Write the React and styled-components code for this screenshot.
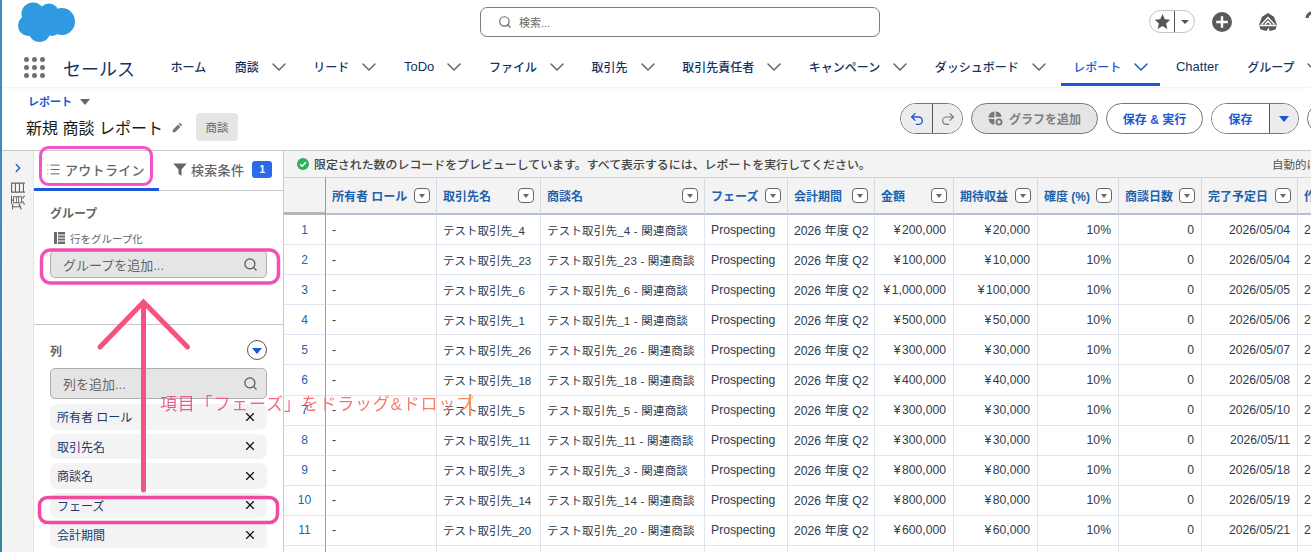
import React from "react";
import styled, { createGlobalStyle } from "styled-components";
import { ChevronDown, ChevronRight, Search, X, List, Undo2, Redo2 } from "lucide-react";

const FONT = `"Liberation Sans", "Noto Sans CJK JP", sans-serif`;

const Global = createGlobalStyle`
  html, body { margin: 0; padding: 0; background: #fff; }
  body { font-family: ${FONT}; overflow: hidden; }
  * { box-sizing: border-box; }
`;

const Page = styled.div`
  position: relative;
  width: 1311px;
  height: 552px;
  overflow: hidden;
  display: flex;
  flex-direction: column;
  background: #fff;
`;
const DesktopEdge = styled.div`
  position: absolute;
  left: 0;
  top: 0;
  bottom: 0;
  width: 2px;
  background: linear-gradient(#3d8fc4, #3a8ab8 60%, #2f8c96);
`;

/* top bar */
const TopBar = styled.header`
  height: 50px;
  flex: none;
  display: grid;
  grid-template-columns: 480px 400px 1fr;
`;
const LogoCell = styled.div`
  padding: 2px 0 0 18px;
`;
const SearchBox = styled.div`
  margin-top: 7px;
  height: 30px;
  border: 1px solid #7d7d7d;
  border-radius: 7px;
  display: flex;
  align-items: center;
  padding-left: 17px;
  gap: 7px;
  font-size: 11px;
  color: #666;
`;
const Tools = styled.div`
  padding: 10px 0 0 269px;
  display: flex;
  align-items: flex-start;
`;
const Fav = styled.div`
  width: 46px;
  height: 23px;
  border: 1px solid #c4c4c4;
  border-radius: 12px;
  display: flex;
  flex: none;
`;
const FavPart = styled.div`
  width: ${(p) => p.$w}px;
  display: flex;
  align-items: center;
  justify-content: center;
  border-left: ${(p) => (p.$split ? "1px solid #555" : "none")};
`;
const ToolIcon = styled.div`
  flex: none;
  margin-left: ${(p) => p.$ml}px;
  height: 23px;
  display: flex;
  align-items: center;
`;

/* nav */
const Nav = styled.nav`
  height: 37px;
  flex: none;
  display: flex;
  align-items: stretch;
  padding-left: 24px;
  box-shadow: 0 1px 2px rgba(0, 0, 0, 0.06);
  position: relative;
`;
const AppGrid = styled.div`
  width: 21px;
  flex: none;
  display: grid;
  grid-template-columns: repeat(3, 5px);
  grid-auto-rows: 5px;
  gap: 3px;
  align-content: center;
  padding-bottom: 2px;
`;
const Dot = styled.span`
  border-radius: 50%;
  background: #6f6f6f;
`;
const AppName = styled.div`
  width: 95px;
  flex: none;
  margin-left: 18px;
  font-size: 18px;
  color: #14335f;
  display: flex;
  align-items: center;
  padding-bottom: 1px;
  white-space: nowrap;
`;
const NavItems = styled.div`
  display: flex;
  flex: none;
  gap: 3.6px;
  white-space: nowrap;
`;
const NavItem = styled.div`
  display: flex;
  align-items: center;
  gap: 14px;
  padding: 0 12.5px;
  margin-bottom: 1px;
  font-size: ${(p) => (p.$latin ? "13px" : "12px")};
  font-weight: 500;
  color: ${(p) => (p.$active ? "#1b57d6" : "#14335f")};
  border-bottom: 3px solid ${(p) => (p.$active ? "#1b57d6" : "transparent")};
  svg {
    color: ${(p) => (p.$active ? "#1b57d6" : "#666")};
    margin: 0 -6px;
  }
`;

/* page header */
const PageHead = styled.div`
  height: 63px;
  flex: none;
  display: flex;
  justify-content: space-between;
  padding: 0 0 0 26px;
`;
const Crumbs = styled.div`
  padding-top: 8px;
`;
const CrumbLink = styled.div`
  display: flex;
  align-items: center;
  gap: 8px;
  padding-left: 2px;
  font-size: 11px;
  font-weight: 700;
  color: #1b57d6;
  line-height: 14px;
`;
const Caret = styled.span`
  width: 0;
  height: 0;
  border-left: ${(p) => p.$s}px solid transparent;
  border-right: ${(p) => p.$s}px solid transparent;
  border-top: ${(p) => p.$h}px solid ${(p) => p.$c};
`;
const TitleRow = styled.div`
  display: flex;
  align-items: center;
  margin-top: 4px;
  height: 28px;
`;
const Title = styled.div`
  font-size: 16px;
  color: #181818;
  white-space: nowrap;
`;
const ObjectBadge = styled.div`
  margin-left: 13px;
  width: 42px;
  height: 28px;
  background: #e5e5e5;
  border-radius: 4px;
  display: flex;
  align-items: center;
  justify-content: center;
  font-size: 11.5px;
  color: #666;
`;
const Actions = styled.div`
  display: flex;
  gap: 8px;
  padding-top: 16px;
  width: 411px;
  flex: none;
  align-items: flex-start;
`;
const Btn = styled.div`
  flex: none;
  height: 31px;
  width: ${(p) => p.$w}px;
  border: 1px solid #777;
  border-radius: 16px;
  background: ${(p) => (p.$off ? "#e5e5e5" : "#fff")};
  color: ${(p) => (p.$off ? "#808080" : "#1b57d6")};
  font-size: 12px;
  font-weight: 700;
  display: flex;
  align-items: center;
  justify-content: center;
  gap: 6px;
  white-space: nowrap;
`;
const SplitBtn = styled.div`
  flex: none;
  height: 31px;
  width: ${(p) => p.$w}px;
  border: 1px solid #777;
  border-radius: 16px;
  overflow: hidden;
  display: flex;
`;
const SplitPart = styled.div`
  width: ${(p) => p.$w}px;
  flex: ${(p) => (p.$w ? "none" : "1")};
  background: ${(p) => (p.$off ? "#ececec" : "#fff")};
  border-left: ${(p) => (p.$split ? "1px solid #555" : "none")};
  color: ${(p) => p.$c || "#1b57d6"};
  font-size: 12px;
  font-weight: 700;
  display: flex;
  align-items: center;
  justify-content: center;
`;

/* main */
const Main = styled.main`
  flex: 1;
  min-height: 0;
  display: flex;
  border-top: 1px solid #c9c9c9;
`;
const Rail = styled.aside`
  width: 34px;
  flex: none;
  background: #f3f3f3;
  border-right: 1px solid #e5e5e5;
  display: flex;
  flex-direction: column;
  align-items: center;
  padding: 10px 0 0 2px;
  color: #1b57d6;
`;
const RailLabel = styled.div`
  margin-top: 5px;
  writing-mode: vertical-rl;
  text-orientation: sideways;
  transform: rotate(180deg);
  font-size: 15px;
  line-height: 15px;
  color: #666;
`;
const Panel = styled.section`
  width: 250px;
  flex: none;
  border-right: 1px solid #c9c9c9;
  display: flex;
  flex-direction: column;
`;
const Tabs = styled.div`
  height: 40px;
  flex: none;
  display: flex;
  border-bottom: 1px solid #c9c9c9;
`;
const Tab = styled.div`
  width: ${(p) => p.$w}px;
  flex: none;
  height: 40px;
  padding-left: ${(p) => p.$pl}px;
  display: flex;
  align-items: center;
  gap: 4px;
  font-size: 13px;
  font-weight: 500;
  letter-spacing: 0.3px;
  color: #666;
  border-bottom: 3px solid ${(p) => (p.$active ? "#1b57d6" : "transparent")};
`;
const CountBadge = styled.span`
  width: 20px;
  height: 17px;
  margin-left: 4px;
  border-radius: 3px;
  background: #2a6ae9;
  color: #fff;
  font-size: 10px;
  font-weight: 700;
  letter-spacing: 0;
  display: flex;
  align-items: center;
  justify-content: center;
`;
const Section = styled.div`
  padding: ${(p) => p.$pt}px 16px 0;
  height: ${(p) => p.$h || "auto"};
  border-bottom: ${(p) => (p.$line ? "1px solid #c9c9c9" : "none")};
  flex: none;
`;
const SectionHead = styled.div`
  display: flex;
  align-items: center;
  justify-content: space-between;
  height: 20px;
  font-size: 12px;
  font-weight: 700;
  color: #666;
`;
const SectionHeadTight = styled(SectionHead)`
  margin-top: -1px;
`;
const GroupHint = styled.div`
  display: flex;
  align-items: center;
  gap: 5px;
  margin: 8px 0 0 4px;
  height: 16px;
  font-size: 10.5px;
  color: #666;
`;
const PickInput = styled.div`
  height: ${(p) => p.$h}px;
  margin-top: ${(p) => p.$mt}px;
  border: 1px solid #b0b0b0;
  border-radius: 5px;
  background: #e5e5e5;
  display: flex;
  align-items: center;
  justify-content: space-between;
  padding: 0 8px 0 12px;
  font-size: 13px;
  color: #666;
`;
const Pills = styled.div`
  display: flex;
  flex-direction: column;
  gap: 4px;
  margin-top: 5px;
`;
const Pill = styled.div`
  height: 25.5px;
  border-radius: 7px;
  background: #f3f3f3;
  display: flex;
  align-items: center;
  justify-content: space-between;
  padding: 0 10px 0 7px;
  font-size: 12px;
  color: #17386f;
  svg { color: #111; }
`;
const RoundBtn = styled.div`
  width: 20px;
  height: 20px;
  border: 1px solid #555;
  border-radius: 50%;
  display: flex;
  align-items: center;
  justify-content: center;
  padding-top: 1px;
`;

/* report */
const Report = styled.section`
  flex: 1;
  min-width: 0;
  display: flex;
  flex-direction: column;
  overflow: hidden;
`;
const Notice = styled.div`
  height: 26px;
  flex: none;
  background: #f3f3f3;
  display: flex;
  align-items: center;
  justify-content: space-between;
  padding: 0 0 1px 13px;
  font-size: 11.93px;
  font-weight: 500;
  color: #444;
  white-space: nowrap;
`;
const NoticeMsg = styled.div`
  display: flex;
  align-items: center;
  gap: 5px;
`;
const NoticeAuto = styled.div`
  width: 39px;
  overflow: hidden;
  font-weight: 400;
  font-size: 11.5px;
  color: #555;
`;
const Table = styled.table`
  border-collapse: separate;
  border-spacing: 0;
  table-layout: fixed;
  width: 1228px;
`;
const HeadCell = styled.th`
  height: 38px;
  padding: 0 6px;
  background: #f3f3f3;
  border-top: 1px solid #cfd6e0;
  border-right: 1px solid #d3dae6;
  border-bottom: 2px solid #b4c0d2;
  text-align: left;
  font-size: 12px;
  font-weight: 700;
  color: #1c62ad;
  white-space: nowrap;
  overflow: hidden;
`;
const CornerCell = styled(HeadCell)`
  border-right: 1px solid #8f9cb0;
  border-bottom: 3px solid #b5b5b5;
`;
const HeadInner = styled.div`
  display: flex;
  align-items: center;
  justify-content: space-between;
`;
const SortBtn = styled.span`
  width: 16px;
  height: 15px;
  flex: none;
  border: 1px solid #666;
  border-radius: 4px;
  background: #fff;
  display: flex;
  align-items: center;
  justify-content: center;
`;
const Cell = styled.td`
  height: 30.1px;
  padding: 0 ${(p) => (p.$num ? 7 : 6)}px 0;
  border-right: 1px solid #dfe4ee;
  border-bottom: 1px solid #dfe4ee;
  font-size: ${(p) => (p.$latin || p.$num ? "12.2px" : "11.5px")};
  letter-spacing: ${(p) => (p.$wide ? "0.2px" : "0")};
  color: #2e3b4e;
  text-align: ${(p) => (p.$num ? "right" : "left")};
  white-space: nowrap;
  overflow: hidden;
`;
const IndexCell = styled(Cell)`
  text-align: center;
  color: #1c62ad;
  font-size: 12px;
  padding: 0;
  border-right: 1px solid #8f9cb0;
`;
const Yen = styled.span`
  margin-right: 1.5px;
`;

/* annotation layer */
const Markup = styled.svg`
  position: absolute;
  left: 0;
  top: 0;
  pointer-events: none;
`;
const Note = styled.div`
  position: absolute;
  left: 160px;
  top: 394px;
  width: 313px;
  height: 22px;
  line-height: 22px;
  font-size: 17px;
  letter-spacing: 0.8px;
  white-space: nowrap;
  color: transparent;
  background: linear-gradient(90deg, #f2528f, #f5885c);
  -webkit-background-clip: text;
  background-clip: text;
`;
const NoteCaret = styled.div`
  position: absolute;
  left: 469px;
  top: 394px;
  width: 2px;
  height: 22px;
  background: #f4935a;
`;

const navItems = [
  { label: "ホーム" },
  { label: "商談", chev: true },
  { label: "リード", chev: true },
  { label: "ToDo", chev: true, latin: true },
  { label: "ファイル", chev: true },
  { label: "取引先", chev: true },
  { label: "取引先責任者", chev: true },
  { label: "キャンペーン", chev: true },
  { label: "ダッシュボード", chev: true },
  { label: "レポート", chev: true, active: true },
  { label: "Chatter", latin: true },
  { label: "グループ", chev: true },
];
const columns = [
  ["所有者 ロール", 111],
  ["取引先名", 104],
  ["商談名", 164],
  ["フェーズ", 83],
  ["会計期間", 87],
  ["金額", 79],
  ["期待収益", 84],
  ["確度 (%)", 81],
  ["商談日数", 83],
  ["完了予定日", 96],
  ["作成日", 214],
];
const rows = [
  [1, 4, "200,000", "20,000", "05/04"],
  [2, 23, "100,000", "10,000", "05/04"],
  [3, 6, "1,000,000", "100,000", "05/05"],
  [4, 1, "500,000", "50,000", "05/06"],
  [5, 26, "300,000", "30,000", "05/07"],
  [6, 18, "400,000", "40,000", "05/08"],
  [7, 5, "300,000", "30,000", "05/10"],
  [8, 11, "300,000", "30,000", "05/11"],
  [9, 3, "800,000", "80,000", "05/18"],
  [10, 14, "800,000", "80,000", "05/19"],
  [11, 20, "600,000", "60,000", "05/21"],
];
const pills = ["所有者 ロール", "取引先名", "商談名", "フェーズ", "会計期間"];

const Cloud = () => (
  <svg width="58" height="41" viewBox="18 2 58 41" fill="#2f9ae0">
    <circle cx="33" cy="14" r="11.5" />
    <circle cx="49" cy="13.5" r="10" />
    <ellipse cx="62" cy="21.5" rx="13" ry="13.5" />
    <circle cx="28.5" cy="25.5" r="10.5" />
    <circle cx="39.5" cy="31" r="11" />
    <circle cx="52" cy="27" r="9" />
    <rect x="30" y="14" width="32" height="16" />
  </svg>
);
const Star = ({ size, color }) => (
  <svg width={size} height={size} viewBox="0 0 24 24" fill={color}>
    <path d="M12 1.5l3.2 7.2 7.8.8-5.9 5.2 1.8 7.8L12 18.4l-6.9 4.1 1.8-7.8L1 9.5l7.8-.8z" />
  </svg>
);
const PlusCircle = () => (
  <svg width="20" height="20" viewBox="0 0 20 20">
    <circle cx="10" cy="10" r="10" fill="#5a5a5a" />
    <path d="M10 4.2v11.6M4.2 10h11.6" stroke="#fff" strokeWidth="2.4" />
  </svg>
);
const Trail = () => (
  <svg width="20" height="20" viewBox="0 0 20 20" fill="#5a5a5a">
    <path d="M10 1l6 3.8 3 8.2-1.5 4.5-6 1.5-.8-3.5L8.6 19l-6-1.5L1 13l3-8.2z" />
    <path d="M3.5 12.5L10 5.5l6.5 7M7 12.5l3-3.2 3 3.2M1.5 13.5h17" fill="none" stroke="#fff" strokeWidth="1.3" />
  </svg>
);
const Help = () => (
  <svg width="16" height="22" viewBox="0 0 16 22" fill="none" stroke="#5a5a5a" strokeWidth="3.2">
    <path d="M2 7c0-3 2.5-5 6-5s6 2 6 5c0 4-6 4-6 9" />
  </svg>
);
const Pencil = () => (
  <svg width="11" height="11" viewBox="0 0 12 12" fill="#777" style={{ marginLeft: 9 }}>
    <path d="M8.6.8l2.6 2.6-1.3 1.3-2.6-2.6zM6.6 2.8l2.6 2.6-5.6 5.6L.6 11.4 1 8.4z" />
  </svg>
);
const ChartIcon = () => (
  <svg width="15" height="15" viewBox="0 0 15 15" fill="#777">
    <path d="M6.4.5v6H.5A6 6 0 0 1 6.4.5zM7.8.5a6 6 0 0 1 5.7 5.2H7.8zM.6 7.9h5.8v5.8A6 6 0 0 1 .6 7.9z" />
    <circle cx="11" cy="11" r="2.6" fill="none" stroke="#777" strokeWidth="1.8" />
  </svg>
);
const Funnel = () => (
  <svg width="14" height="13" viewBox="0 0 14 13" fill="#666">
    <path d="M.3.5h13.4L8.5 6.6V13L5.5 10.8V6.6z" />
  </svg>
);
const RowsIcon = () => (
  <svg width="11" height="12" viewBox="0 0 11 12">
    <rect x="0" y="0" width="11" height="12" fill="#6a6a6a" />
    <path d="M3.5 0v12M3.5 3h7.5M3.5 6h7.5M3.5 9h7.5" stroke="#fff" strokeWidth="1" />
  </svg>
);
const GreenCheck = () => (
  <svg width="12" height="12" viewBox="0 0 12 12">
    <circle cx="6" cy="6" r="6" fill="#2eb15c" />
    <path d="M3.2 6.2l2 2 3.6-4" fill="none" stroke="#fff" strokeWidth="1.6" />
  </svg>
);

export default function App() {
  return (
    <Page>
      <Global />
      <TopBar>
        <LogoCell>
          <Cloud />
        </LogoCell>
        <SearchBox>
          <Search size={14} color="#666" strokeWidth={2} />
          検索...
        </SearchBox>
        <Tools>
          <Fav>
            <FavPart $w={24}>
              <Star size={17} color="#555" />
            </FavPart>
            <FavPart $w={20} $split>
              <Caret $s={4} $h={4} $c="#555" />
            </FavPart>
          </Fav>
          <ToolIcon $ml={17}>
            <PlusCircle />
          </ToolIcon>
          <ToolIcon $ml={26}>
            <Trail />
          </ToolIcon>
          <ToolIcon $ml={27}>
            <Help />
          </ToolIcon>
        </Tools>
      </TopBar>

      <Nav>
        <AppGrid>
          {Array.from({ length: 9 }).map((_, i) => (
            <Dot key={i} />
          ))}
        </AppGrid>
        <AppName>セールス</AppName>
        <NavItems>
          {navItems.map(({ label, chev, active, latin }) => (
            <NavItem key={label} $active={active} $latin={latin}>
              {label}
              {chev && <ChevronDown size={24} strokeWidth={1.5} />}
            </NavItem>
          ))}
        </NavItems>
      </Nav>

      <PageHead>
        <Crumbs>
          <CrumbLink>
            レポート
            <Caret $s={5} $h={6} $c="#666" />
          </CrumbLink>
          <TitleRow>
            <Title>新規 商談 レポート</Title>
            <Pencil />
            <ObjectBadge>商談</ObjectBadge>
          </TitleRow>
        </Crumbs>
        <Actions>
          <SplitBtn $w={63}>
            <SplitPart $w={31} $off>
              <Undo2 size={16} strokeWidth={2} />
            </SplitPart>
            <SplitPart $split $off $c="#777">
              <Redo2 size={16} strokeWidth={1.8} />
            </SplitPart>
          </SplitBtn>
          <Btn $w={127} $off>
            <ChartIcon />
            グラフを追加
          </Btn>
          <Btn $w={97}>保存 &amp; 実行</Btn>
          <SplitBtn $w={88}>
            <SplitPart $w={57}>保存</SplitPart>
            <SplitPart $split $off>
              <Caret $s={5} $h={6} $c="#1b57d6" />
            </SplitPart>
          </SplitBtn>
          <Btn $w={40} />
        </Actions>
      </PageHead>

      <Main>
        <Rail>
          <ChevronRight size={14} strokeWidth={2.4} />
          <RailLabel>項目</RailLabel>
        </Rail>
        <Panel>
          <Tabs>
            <Tab $w={125} $pl={12} $active>
              <List size={15} strokeWidth={1.6} />
              アウトライン
            </Tab>
            <Tab $w={124} $pl={14}>
              <Funnel />
              検索条件
              <CountBadge>1</CountBadge>
            </Tab>
          </Tabs>
          <Section $pt={12} $h="134px" $line>
            <SectionHeadTight>グループ</SectionHeadTight>
            <GroupHint>
              <RowsIcon />
              行をグループ化
            </GroupHint>
            <PickInput $h={28} $mt={4}>
              グループを追加...
              <Search size={15} color="#555" strokeWidth={2} />
            </PickInput>
          </Section>
          <Section $pt={15}>
            <SectionHead>
              列
              <RoundBtn>
                <Caret $s={5} $h={6} $c="#1b57d6" />
              </RoundBtn>
            </SectionHead>
            <PickInput $h={31} $mt={8}>
              列を追加...
              <Search size={15} color="#555" strokeWidth={2} />
            </PickInput>
            <Pills>
              {pills.map((p) => (
                <Pill key={p}>
                  {p}
                  <X size={14} strokeWidth={2} />
                </Pill>
              ))}
            </Pills>
          </Section>
        </Panel>

        <Report>
          <Notice>
            <NoticeMsg>
              <GreenCheck />
              限定された数のレコードをプレビューしています。すべて表示するには、レポートを実行してください。
            </NoticeMsg>
            <NoticeAuto>自動的に更新</NoticeAuto>
          </Notice>
          <Table>
            <colgroup>
              <col style={{ width: 42 }} />
              {columns.map(([c, w]) => (
                <col key={c} style={{ width: w }} />
              ))}
            </colgroup>
            <thead>
              <tr>
                <CornerCell />
                {columns.map(([c]) => (
                  <HeadCell key={c}>
                    <HeadInner>
                      {c}
                      <SortBtn>
                        <Caret $s={3} $h={4} $c="#666" />
                      </SortBtn>
                    </HeadInner>
                  </HeadCell>
                ))}
              </tr>
            </thead>
            <tbody>
              {rows.map(([n, acc, amt, exp, date]) => (
                <tr key={n}>
                  <IndexCell>{n}</IndexCell>
                  <Cell $latin>-</Cell>
                  <Cell>テスト取引先_{acc}</Cell>
                  <Cell $wide>テスト取引先_{acc} - 関連商談</Cell>
                  <Cell $latin>Prospecting</Cell>
                  <Cell $latin>2026 年度 Q2</Cell>
                  <Cell $num>
                    <Yen>¥</Yen>
                    {amt}
                  </Cell>
                  <Cell $num>
                    <Yen>¥</Yen>
                    {exp}
                  </Cell>
                  <Cell $num>10%</Cell>
                  <Cell $num>0</Cell>
                  <Cell $num>2026/{date}</Cell>
                  <Cell $latin>2026/04/20</Cell>
                </tr>
              ))}
              <tr>
                <IndexCell />
                {columns.map(([c]) => (
                  <Cell key={c} />
                ))}
              </tr>
            </tbody>
          </Table>
        </Report>
      </Main>

      <DesktopEdge />
      <Markup width="1311" height="552" viewBox="0 0 1311 552" fill="none">
        <rect x="40.5" y="147.5" width="111" height="37" rx="8" stroke="#f352c8" strokeWidth="3" />
        <rect x="41.5" y="250" width="237" height="33" rx="9" stroke="#f34fb2" strokeWidth="3.5" />
        <rect x="39.5" y="497.5" width="238" height="25" rx="8" stroke="#f04aa0" strokeWidth="3.5" />
        <path d="M143.5 490V303M100 347l43.5-45 44 45" stroke="#f5527e" strokeWidth="5" strokeLinecap="round" />
      </Markup>
      <Note>項目「フェーズ」をドラッグ&ドロップ</Note>
      <NoteCaret />
    </Page>
  );
}
